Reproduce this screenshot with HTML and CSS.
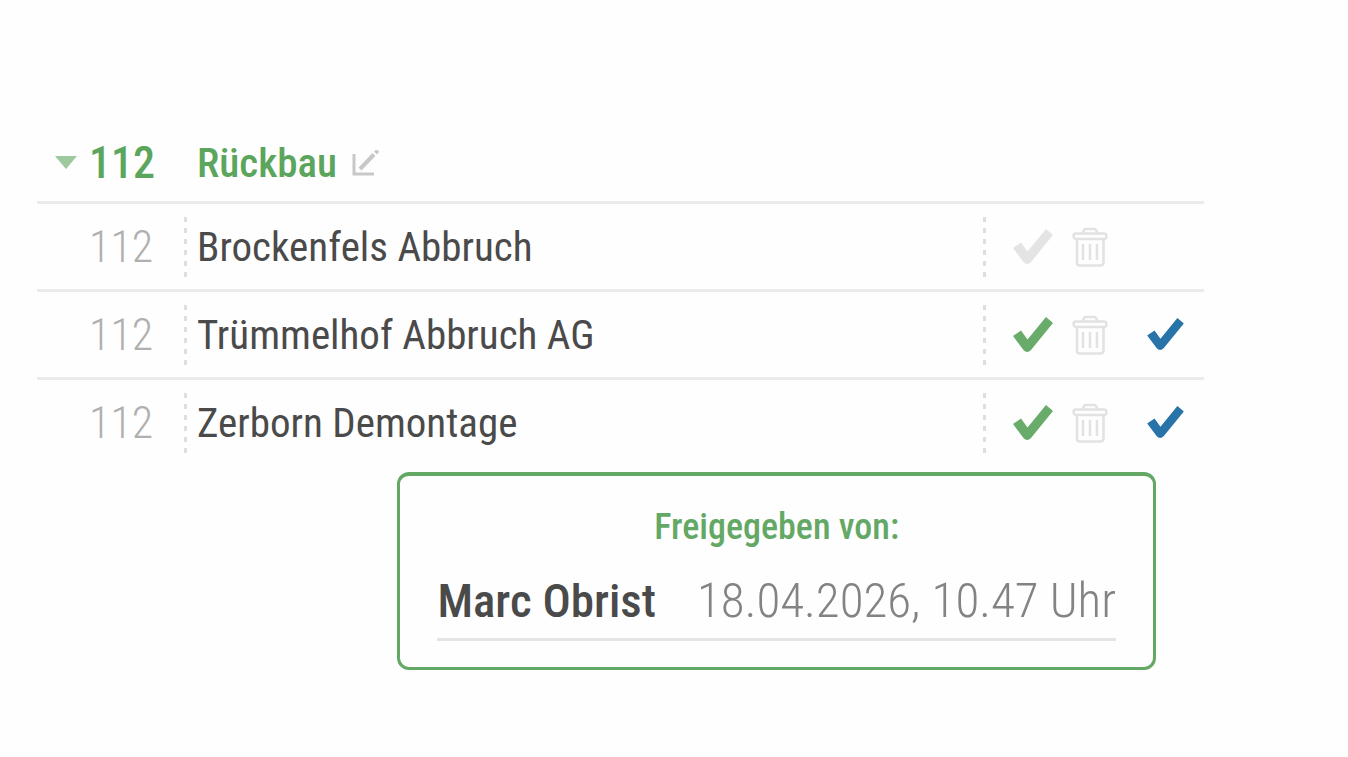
FILE: index.html
```html
<!DOCTYPE html>
<html lang="de">
  <head>
    <meta charset="utf-8">
    <meta name="viewport" content="width=device-width">
    <title>Rückbau</title>
    <link rel="stylesheet" href="styles.css">
  </head>
  <body>
    <!-- shared icons -->
    <svg class="sprite" aria-hidden="true">
      <symbol id="check" viewBox="0 0 40 36">
        <path d="M0 19L8 13.500L14.500 22.500L33 0L40 6L18 33Q14 37 10.500 33Z"/>
      </symbol>
      <symbol id="trash" viewBox="0 0 36 40">
        <g fill="none" stroke="currentColor" stroke-width="2.500">
          <rect x="1.500" y="6.500" width="33" height="5.500" rx="2.700"/>
          <path d="M11 6Q11.500 2 14 2H22Q24.500 2 25 6M5 12V35.500Q5 38.500 8 38.500H28Q31.500 38.500 31.500 35.500V12M11 17V33M18 17V33M25 17V33"/>
        </g>
      </symbol>
    </svg>

    <div class="container">
      <table class="offers">
        <thead>
          <tr>
            <th class="number">
              <button class="toggle" aria-label="Zuklappen"><svg width="22" height="13" viewBox="0 0 22 13"><path d="M0 0H22L11 13Z"/></svg></button>112
            </th>
            <th class="name" colspan="2">
              Rückbau
              <button class="edit" aria-label="Bearbeiten"><svg width="27" height="27" viewBox="0 0 27 27"><path d="M2 4V24H22"/><path class="pencil" d="M8 19L22 4.500M23.500 3L26 0.500"/></svg></button>
            </th>
          </tr>
        </thead>
        <tbody>
          <tr>
            <td class="number">112</td>
            <td class="name">Brockenfels Abbruch</td>
            <td class="actions">
              <div class="icons">
                <button class="check" aria-label="Freigeben"><svg><use href="#check"/></svg></button>
                <button class="trash" aria-label="Löschen"><svg><use href="#trash"/></svg></button>
              </div>
            </td>
          </tr>
          <tr>
            <td class="number">112</td>
            <td class="name">Trümmelhof Abbruch AG</td>
            <td class="actions">
              <div class="icons">
                <button class="check active" aria-label="Freigeben"><svg><use href="#check"/></svg></button>
                <button class="trash" aria-label="Löschen"><svg><use href="#trash"/></svg></button>
                <button class="approved" aria-label="Freigegeben"><svg><use href="#check"/></svg></button>
              </div>
            </td>
          </tr>
          <tr>
            <td class="number">112</td>
            <td class="name">Zerborn Demontage</td>
            <td class="actions">
              <div class="icons">
                <button class="check active" aria-label="Freigeben"><svg><use href="#check"/></svg></button>
                <button class="trash" aria-label="Löschen"><svg><use href="#trash"/></svg></button>
                <button class="approved" aria-label="Freigegeben"><svg><use href="#check"/></svg></button>
              </div>
            </td>
          </tr>
        </tbody>
      </table>

      <div class="approval">
        <h2>Freigegeben von:</h2>
        <p><strong>Marc Obrist</strong><span>18.04.2026, 10.47 Uhr</span></p>
      </div>
    </div>
  </body>
</html>
```
FILE: styles.css
```css
body {
  margin: 0;
  background: #fefefe;
  font-family: "Roboto Condensed", "Roboto", sans-serif;
  color: #4a4a4a;
}
.sprite {
  display: none;
}
.container {
  padding: 124px 144px 0 37px;
}
button {
  padding: 0;
  border: none;
  background: none;
  cursor: pointer;
}
button svg {
  display: block;
}

/* table */
.offers {
  width: 100%;
  border-collapse: separate;
  border-spacing: 0;
  font-size: 41px;
  line-height: 48px;
}
.offers th,
.offers td {
  box-sizing: border-box;
  padding: 0;
  text-align: left;
  white-space: nowrap;
}
.offers th {
  height: 77px;
  font-weight: 500;
  color: #5ba55d;
}
.offers td {
  height: 88px;
  border-top: 3px solid #ebebeb;
}
.offers .number {
  width: 147px;
  padding-left: 52px;
  font-size: 44px;
}
.offers th.number {
  padding-left: 18px;
}
.offers td.number {
  font-weight: 300;
  color: #b0b0b0;
}
.offers .name {
  padding-left: 13px;
}
.offers .actions {
  width: 221px;
  padding-left: 30px;
}
/* dashed column separators */
td.name,
td.actions {
  background: repeating-linear-gradient(#dedede 0 5px, transparent 5px 11px) 0 center / 3px 60px no-repeat;
}
.toggle {
  margin-right: 12px;
  vertical-align: middle;
  fill: #9cc99d;
}
.toggle svg {
  margin-bottom: 6px;
}
.edit {
  margin-left: 6px;
  fill: none;
  stroke: #c8c8c8;
  stroke-width: 3;
}
.edit .pencil {
  stroke-width: 4;
}
.icons {
  display: flex;
  align-items: center;
}
.check svg {
  width: 40px;
  height: 36px;
  fill: #e4e4e4;
}
.check.active svg {
  fill: #68ab6a;
}
.trash {
  margin-left: 19px;
  color: #e2e2e2;
}
.trash svg {
  width: 36px;
  height: 40px;
}
.approved {
  margin-left: 39px;
}
.approved svg {
  width: 37px;
  height: 33px;
  fill: #2873a8;
}

/* approval info */
.approval {
  box-sizing: border-box;
  width: 65%;
  margin: 7px 48px 0 auto;
  padding: 26px 37px;
  border: 3px solid #64a866;
  border-top-width: 4px;
  border-radius: 12px;
}
.approval h2 {
  margin: 0;
  font-size: 36px;
  font-weight: 500;
  line-height: 50px;
  text-align: center;
  color: #64a866;
}
.approval p {
  display: flex;
  justify-content: space-between;
  margin: 17px 0 0;
  padding-bottom: 5px;
  border-bottom: 3px solid #e4e4e4;
  font-size: 49px;
  line-height: 64px;
  white-space: nowrap;
}
.approval strong {
  font-size: 47px;
  font-weight: 500;
}
.approval span {
  color: #838383;
  font-weight: 300;
}
```
